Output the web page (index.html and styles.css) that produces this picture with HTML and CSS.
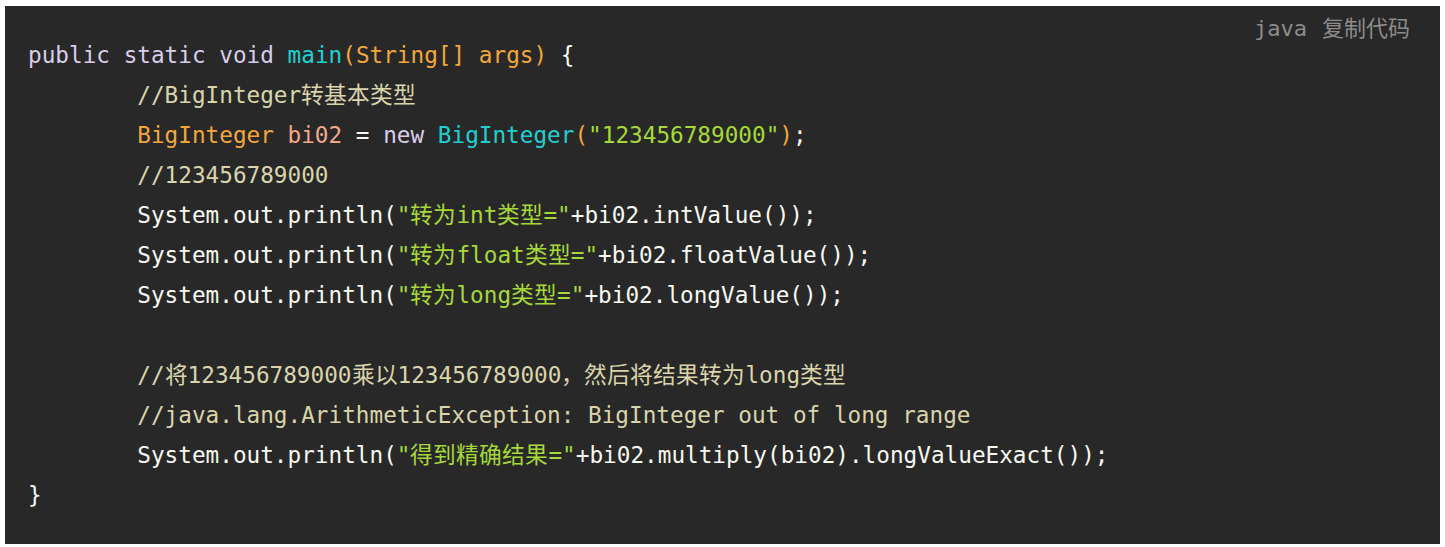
FILE: index.html
```html
<!DOCTYPE html>
<html lang="zh-CN">
<head>
<meta charset="utf-8">
<title>Code</title>
<link rel="stylesheet" href="styles.css">
</head>
<body>
<div class="box">
  <div class="toolbar"><span class="lang">java</span><span class="copy">复制代码</span></div>
  <pre class="code"><code><span class="kw">public</span> <span class="kw">static</span> <span class="kw">void</span> <span class="fn">main</span><span class="or">(String[] args)</span> {
        <span class="cm">//BigInteger转基本类型</span>
        <span class="or">BigInteger</span> <span class="var">bi02</span> = <span class="kw">new</span> <span class="fn">BigInteger</span><span class="or">(</span><span class="str">"123456789000"</span><span class="or">)</span>;
        <span class="cm">//123456789000</span>
        System.out.println(<span class="str">"转为int类型="</span>+bi02.intValue());
        System.out.println(<span class="str">"转为float类型="</span>+bi02.floatValue());
        System.out.println(<span class="str">"转为long类型="</span>+bi02.longValue());

        <span class="cm">//将123456789000乘以123456789000，然后将结果转为long类型</span>
        <span class="cm">//java.lang.ArithmeticException: BigInteger out of long range</span>
        System.out.println(<span class="str">"得到精确结果="</span>+bi02.multiply(bi02).longValueExact());
}</code></pre>
</div>
</body>
</html>
```
FILE: styles.css
```css
html, body {
  margin: 0;
  padding: 0;
  background: #ffffff;
}
body {
  padding: 6px 0 0 5px;
}
.box {
  position: relative;
  width: 1435px;
  height: 538px;
  box-sizing: border-box;
  background: #282828;
  overflow: hidden;
}
.toolbar {
  position: absolute;
  top: 6px;
  right: 30px;
  display: flex;
  align-items: baseline;
  gap: 15px;
  font-family: "DejaVu Sans Mono", "Noto Sans CJK SC", monospace;
  font-size: 22px;
  line-height: 28px;
  color: #8c8c8c;
}
.toolbar .copy {
  font-family: "Noto Sans CJK SC", sans-serif;
}
.code {
  margin: 0;
  padding: 29px 0 0 23px;
  font-family: "DejaVu Sans Mono", "Noto Sans CJK SC", monospace;
  font-size: 22.7px;
  line-height: 40px;
  color: #f8f8f2;
  white-space: pre;
}
.kw { color: #d9cdea; }
.fn { color: #20d0d0; }
.or { color: #f1a73c; }
.var { color: #f3a78c; }
.str { color: #a6d83a; }
.cm { color: #d9d4ab; }
```
